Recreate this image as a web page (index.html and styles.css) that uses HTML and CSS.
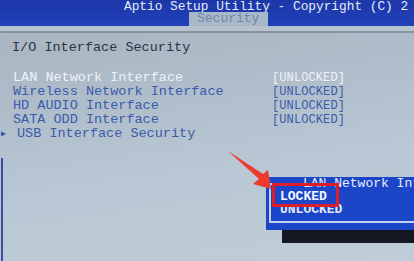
FILE: index.html
```html
<!DOCTYPE html>
<html>
<head>
<meta charset="utf-8">
<link rel="stylesheet" href="styles.css">
</head>
<body>
<div class="screen">
  <header class="topbar">
    <div class="title">Aptio Setup Utility - Copyright (C) 2</div>
    <div class="tab">Security</div>
  </header>
  <div class="sep"></div>
  <main class="content">
    <div class="heading">I/O Interface Security</div>
    <div class="list">
      <div class="row active"><span class="mark"></span><span class="name">LAN Network Interface</span><span class="val">[UNLOCKED]</span></div>
      <div class="row"><span class="mark"></span><span class="name">Wireless Network Interface</span><span class="val">[UNLOCKED]</span></div>
      <div class="row"><span class="mark"></span><span class="name">HD AUDIO Interface</span><span class="val">[UNLOCKED]</span></div>
      <div class="row"><span class="mark"></span><span class="name">SATA ODD Interface</span><span class="val">[UNLOCKED]</span></div>
      <div class="row sub"><span class="mark">&#9654;</span><span class="name">USB Interface Security</span><span class="val"></span></div>
    </div>
  </main>
  <div class="popup">
    <div class="frame"></div>
    <div class="ptitle">LAN Network Inte</div>
    <div class="opts">
      <div class="opt sel">LOCKED</div>
      <div class="opt dim">UNLOCKED</div>
    </div>
  </div>
  <div class="redbox"></div>
  <svg class="arrow" width="414" height="261" viewBox="0 0 414 261">
    <polygon points="228,151 263,174 268,170 271,189 253,184 259,179" fill="#ee3a2e"/>
  </svg>
</div>
</body>
</html>
```
FILE: styles.css
```css
html, body {
  margin: 0;
  padding: 0;
}
body {
  width: 414px;
  height: 261px;
  overflow: hidden;
  font-family: "Liberation Mono", "DejaVu Sans Mono", monospace;
}
.screen {
  position: relative;
  width: 414px;
  height: 261px;
  overflow: hidden;
  background:
    linear-gradient(#3a4ca6, #3a4ca6) no-repeat 1px 158px / 2px 103px,
    linear-gradient(172deg, #a6b3be 0%, #afbdca 35%, #b9c8d4 65%, #bfcdd8 100%);
}
.topbar {
  height: 26px;
  background: linear-gradient(180deg, #1c37a8 0%, #2142b8 100%);
  display: flex;
  flex-direction: column;
}
.title {
  padding-left: 124px;
  padding-top: 1px;
  font-size: 12.8px;
  line-height: 11px;
  color: #e6ebf8;
  white-space: nowrap;
}
.tab {
  margin-top: auto;
  margin-left: 189px;
  width: 79px;
  height: 14px;
  box-sizing: border-box;
  padding-left: 8px;
  background: #a9b8c7;
  color: #6a88ac;
  font-size: 13px;
  line-height: 14px;
}
.sep {
  height: 5px;
  background: #b7c3cc;
  border-bottom: 2px solid #8593a2;
}
.content {
  padding-top: 8px;
}
.heading {
  padding-left: 12px;
  font-size: 13.5px;
  line-height: 14px;
  color: #2b3444;
}
.list {
  margin-top: 16px;
}
.row {
  display: grid;
  grid-template-columns: 13px 259px auto;
  height: 14px;
  line-height: 14px;
  font-size: 13.5px;
  color: #3a5bab;
  white-space: nowrap;
}
.row.active {
  color: #eef2f6;
}
.mark {
  font-size: 8px;
  padding-left: 1px;
  color: #2f4fa8;
}
.row.sub .name {
  padding-left: 4px;
}
.val {
  font-size: 12px;
  letter-spacing: 0.1px;
}
.popup {
  position: absolute;
  left: 266px;
  top: 177px;
  width: 160px;
  height: 53px;
  background: #1c46c8;
  box-shadow: 16px 13px 0 #141820;
}
.frame {
  position: absolute;
  left: 3px;
  top: 6px;
  right: -10px;
  bottom: 7px;
  border: 2px solid #c3d0f3;
}
.ptitle {
  position: absolute;
  left: 35px;
  top: 1px;
  padding: 0 2px;
  background: #1c46c8;
  color: #e9eefc;
  font-size: 13px;
  line-height: 12px;
  white-space: nowrap;
}
.opts {
  position: relative;
  padding-top: 13px;
  padding-left: 14px;
}
.opt {
  font-size: 13px;
  line-height: 13px;
  color: #eef1fb;
  font-weight: bold;
}
.opt.sel {
  color: #f4f7ff;
}
.opt.dim {
  color: #dfe5f6;
}
.redbox {
  position: absolute;
  left: 272px;
  top: 183px;
  width: 67px;
  height: 24px;
  box-sizing: border-box;
  border: 3px solid #de1f2b;
}
.arrow {
  position: absolute;
  left: 0;
  top: 0;
}
```
